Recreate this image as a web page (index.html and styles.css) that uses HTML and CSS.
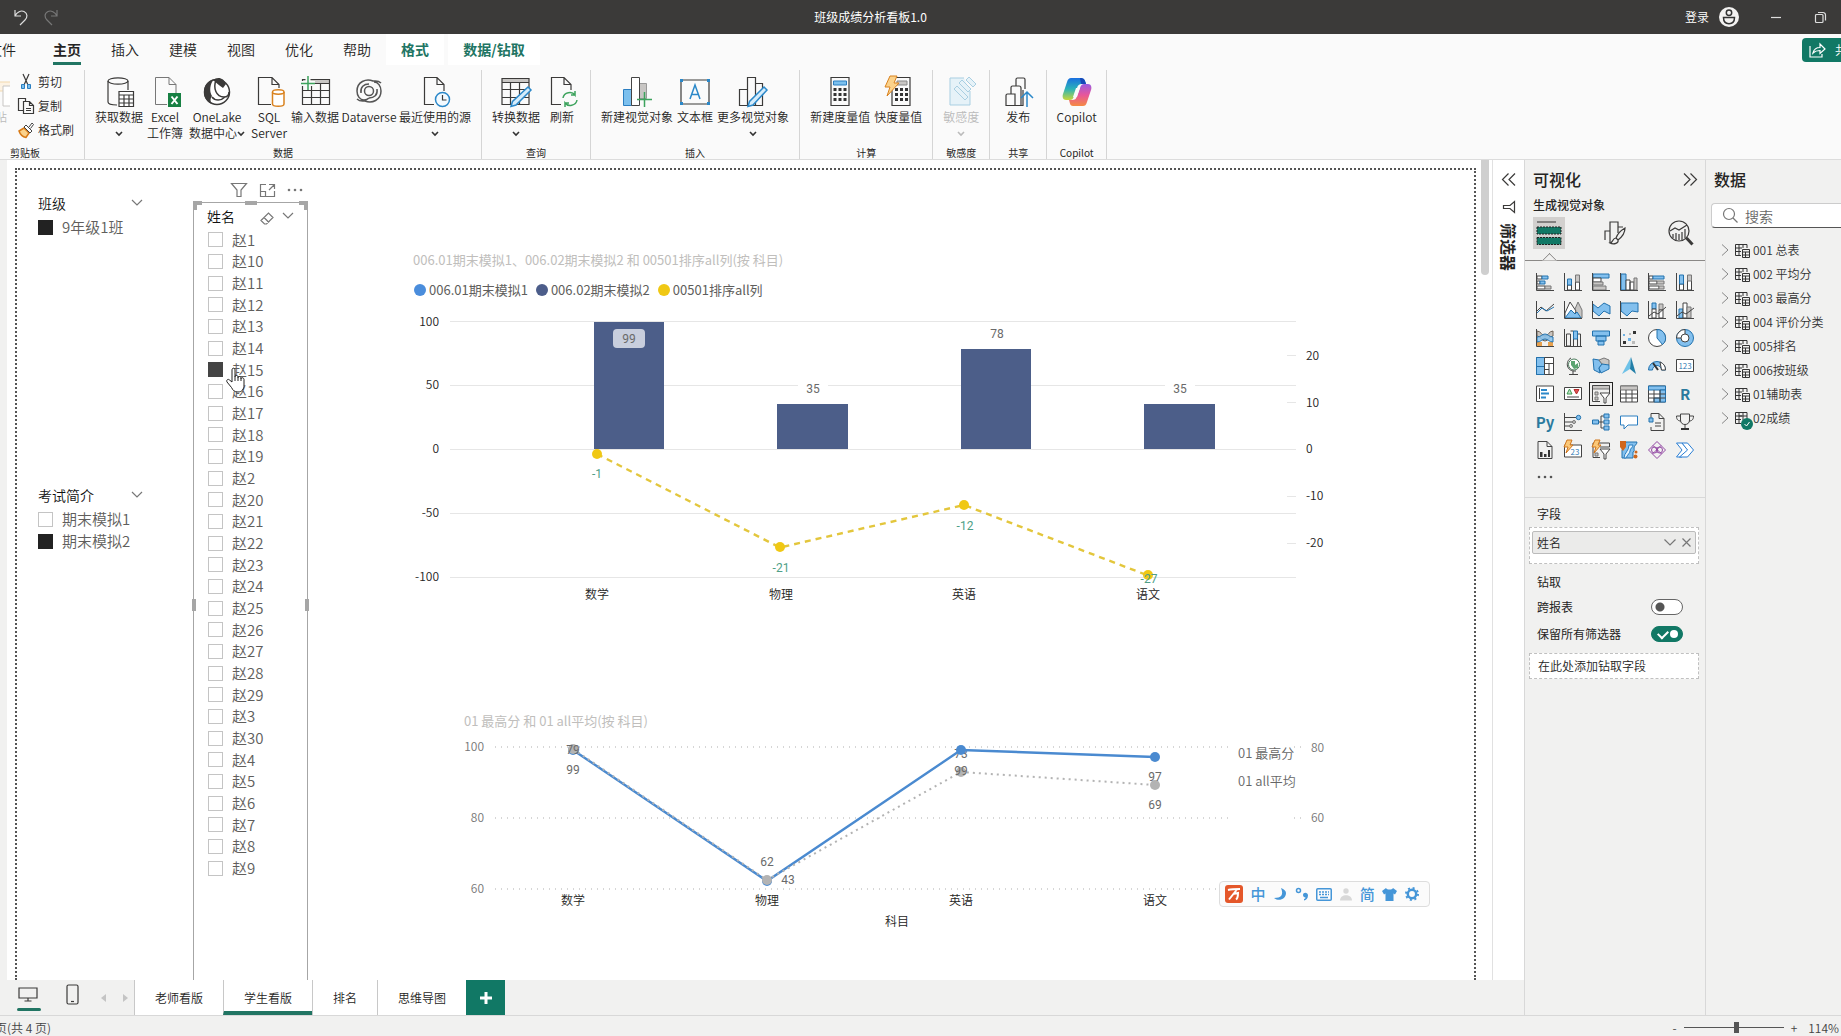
FILE: index.html
```html
<!DOCTYPE html>
<html lang="zh-CN">
<head>
<meta charset="utf-8">
<title>班级成绩分析看板1.0</title>
<meta name="viewport" content="width=device-width, initial-scale=1">
<link rel="stylesheet" href="styles.css">
</head>
<body>
<div class="app">

<header class="titlebar">
  <div class="titlebar-side">
    <button class="ghost" aria-label="撤消"><svg width="16" height="18" viewBox="0 0 16 18" class="ln light"><path d="M2 2v6h6M2 8C4 4 8 2 11 3.500c4 2 3.500 6 1 8.500L7 17"/></svg></button>
    <button class="ghost" aria-label="恢复"><svg width="16" height="18" viewBox="0 0 16 18" class="ln dim"><path d="M14 2v6H8M14 8C12 4 8 2 5 3.500c-4 2-3.500 6-1 8.500l5 5"/></svg></button>
  </div>
  <h1 class="doc-title">班级成绩分析看板1.0</h1>
  <div class="titlebar-side end">
    <a href="#" class="login">登录</a>
    <svg width="20" height="20" viewBox="0 0 20 20"><circle cx="10" cy="10" r="10" fill="#f3f2f1"/><g fill="none" stroke="#333" stroke-width="1.500"><circle cx="10" cy="5.800" r="2.700"/><path d="M4.500 10.500h11c0 4-2 6.200-5.500 6.200s-5.500-2.200-5.500-6.200z"/></g></svg>
    <button class="ghost win" aria-label="最小化"><svg width="10" height="10" viewBox="0 0 10 10" class="ln light"><path d="M0 5.500h10"/></svg></button>
    <button class="ghost win" aria-label="还原"><svg width="11" height="11" viewBox="0 0 11 11" class="ln light"><rect x=".5" y="2.500" width="7.500" height="8" rx="1"/><path d="M3 .5h5a2.500 2.500 0 0 1 2.500 2.500v5.500"/></svg></button>
  </div>
</header>

<div class="ribbon">
  <nav class="tabs">
    <a href="#" class="tab file">文件</a>
    <a href="#" class="tab active"><span>主页</span></a>
    <a href="#" class="tab">插入</a>
    <a href="#" class="tab">建模</a>
    <a href="#" class="tab">视图</a>
    <a href="#" class="tab">优化</a>
    <a href="#" class="tab">帮助</a>
    <a href="#" class="tab context">格式</a>
    <a href="#" class="tab context wide">数据/钻取</a>
    <button class="share"><svg width="17" height="15" viewBox="0 0 17 15" class="ln white"><path d="M1 3v11h12v-3M4 10c1-4 3-5.500 7-5.500V1l5 5-5 4.500V7.500c-3 0-5 .5-7 2.500z"/></svg>共享</button>
  </nav>

  <div class="groups">
    <section class="group clip">
      <div class="items">
        <button class="item paste"><svg width="30" height="30" viewBox="0 0 30 30"><path d="M8 5h21v9H8z" fill="#fdf3e4" stroke="#f3d9ad"/><path d="M14 9h15v20H14z" fill="#fff" stroke="#c8c6c4"/></svg><span>粘贴</span></button>
        <div class="stack">
          <button class="mini"><svg width="16" height="16" viewBox="0 0 16 16"><path d="M5 0l5 11M11 0L6 11" class="ln"/><g fill="#7cc0ee" stroke="#2b7ec1"><path d="M3.500 10.500h3v4h-3zM9.500 10.500h3v4h-3z"/></g></svg>剪切</button>
          <button class="mini"><svg width="16" height="16" viewBox="0 0 16 16" class="ln"><path d="M5 12.500H.5V.5h7V3M5.500 3.500h6l4 4v8h-10zM11.500 3.500v4h4M8 10.500h5M8 12.500h5"/></svg>复制</button>
          <button class="mini"><svg width="16" height="16" viewBox="0 0 16 16"><path d="M1 9l5-3 5 5-3 4.500C5 15 2 12 1 9z" fill="#fbd28b" stroke="#d87a16" stroke-width="1.500"/><path d="M6 5l2-2 6 6-2 2zM11 5l3-4 1.500 1.500-3 4" fill="#fff" stroke="#444"/></svg>格式刷</button>
        </div>
      </div>
      <h2>剪贴板</h2>
    </section>

    <section class="group">
      <div class="items">
        <button class="item"><svg width="30" height="30" viewBox="0 0 30 30" class="ln"><ellipse cx="14" cy="4" rx="10" ry="3.200"/><path d="M4 4v21c0 2 4 3 9 3M24 4v9"/><path d="M15 14.500h14.500v15H15z" fill="#fff"/><path d="M15 18h14.500M15 22h14.500M15 26h14.500M20 18v11M25 18v11"/></svg><span>获取数据</span><svg class="chev" viewBox="0 0 8 6"><path d="M1 1l3 3 3-3"/></svg></button>
        <button class="item"><svg width="30" height="30" viewBox="0 0 30 30"><path d="M17 27.500H5.500v-27H19l7 7V16M19 .5v7h7" fill="none" stroke="#777"/><path d="M18 16h13v14H18z" fill="#178043"/><path d="M21.500 19.500l6 7.500M27.500 19.500L21.500 27" stroke="#fff" stroke-width="2"/></svg><span>Excel<br>工作簿</span></button>
        <button class="item lake"><svg width="30" height="30" viewBox="0 0 30 30"><circle cx="15" cy="15" r="12.500" fill="#fff" stroke="#3b3a39" stroke-width="1.500"/><path d="M12 2C5 4 2 9 2 15c0 6 3 10 8 12-2-3-2-5 0-8-3-5-2-12 2-17z" fill="#3b3a39"/><path d="M11 3c5-4 11-2 13 4l-3 4c-4-3-7-5-10-8z" fill="#3b3a39"/><path d="M14 3c-3 8 0 17 8 17 3 0 5-2 5-5M10 20c3 4 9 4 13 0" fill="none" stroke="#3b3a39" stroke-width="1.500"/></svg><span>OneLake<br>数据中心<svg class="chev" viewBox="0 0 8 6"><path d="M1 1l3 3 3-3"/></svg></span></button>
        <button class="item"><svg width="30" height="30" viewBox="0 0 30 30"><path d="M17 27.500H4.500v-27H18l7 7V11M18 .5v7h7" class="ln"/><g fill="#fff" stroke="#d9821f" stroke-width="1.500"><path d="M18.500 15v12c0 3 11.500 3 11.500 0V15"/><ellipse cx="24.250" cy="15" rx="5.750" ry="2.200"/></g></svg><span>SQL<br>Server</span></button>
        <button class="item"><svg width="30" height="30" viewBox="0 0 30 30"><path d="M2.500 2.500h27v4h-27z" fill="#c8c6c4"/><path d="M2.500 2.500h27v25h-27zM2.500 6.500h27M2.500 13.500h27M2.500 20.500h27M11.500 6.500v21M20.500 6.500v21" class="ln"/><path d="M8 0v13M1 6.500h14" stroke="#fafafa" stroke-width="5"/><path d="M8-1v14M1 6.500h14" stroke="#3da35d" stroke-width="1.500"/></svg><span>输入数据</span></button>
        <button class="item verse"><svg width="30" height="30" viewBox="0 0 30 30" fill="none" stroke="#555" stroke-width="1.500"><path d="M27 6c-3-3-6-2-8-2C12 1 3 5 3 14c0 5 3 9 7 9 3 0 5-2 5-2M3 22c3 3 6 2 8 2 7 3 16-1 16-10 0-5-3-9-7-9"/><circle cx="15" cy="14" r="4.500"/><path d="M7 16c-1-6 3-9 8-9M23 12c1 6-3 9-8 9"/></svg><span>Dataverse</span></button>
        <button class="item"><svg width="30" height="30" viewBox="0 0 30 30"><path d="M14 27.500H4.500v-27H17l7 7V14M17 .5v7h7" class="ln"/><circle cx="22.500" cy="22.500" r="7" fill="#f3faff" stroke="#2b88c9" stroke-width="1.500"/><path d="M22.500 18v5h4" class="ln"/></svg><span>最近使用的源</span><svg class="chev" viewBox="0 0 8 6"><path d="M1 1l3 3 3-3"/></svg></button>
      </div>
      <h2>数据</h2>
    </section>

    <section class="group">
      <div class="items">
        <button class="item"><svg width="30" height="30" viewBox="0 0 30 30"><path d="M1 1.500h27v4H1z" fill="#c8c6c4"/><path d="M1 1.500h27v26H1zM1 5.500h27M1 12.500h27M1 20.500h27M9.500 5.500v22M18.500 5.500v22" class="ln"/><path d="M27 10l3 3-15 15-5 1.500 1.500-5z" fill="#d5ecfb" stroke="#2b88c9" stroke-width="1.500"/></svg><span>转换数据</span><svg class="chev" viewBox="0 0 8 6"><path d="M1 1l3 3 3-3"/></svg></button>
        <button class="item"><svg width="30" height="30" viewBox="0 0 30 30"><path d="M14 27.500H4.500v-27H17l7 7V13M17 .5v7h7" class="ln"/><path d="M16 21c1-6 9-7 12-3v-4M28 18h-4M30 23c-1 6-9 7-12 3v4M18 26h4" fill="none" stroke="#3da35d" stroke-width="1.500"/></svg><span>刷新</span></button>
      </div>
      <h2>查询</h2>
    </section>

    <section class="group">
      <div class="items">
        <button class="item"><svg width="30" height="30" viewBox="0 0 30 30"><path d="M1.500 12.500h8v16h-8z" fill="#7cc0ee" stroke="#2b7ec1"/><path d="M17.500 6.500h7v15h-7z" fill="#c8c6c4" stroke="#999"/><path d="M9.500.5h8v28h-8z" fill="#fff" stroke="#444"/><path d="M22.500 15v15M15 22.500h15" stroke="#3da35d" stroke-width="1.500"/></svg><span>新建视觉对象</span></button>
        <button class="item"><svg width="30" height="30" viewBox="0 0 30 30"><path d="M1 3h28v24H1z" class="ln"/><g fill="#2b88c9"><path d="M0 2h3v3H0zM27 2h3v3h-3zM0 25h3v3H0zM27 25h3v3h-3z"/></g><path d="M10 22l5-14 5 14M12 17.500h6" fill="none" stroke="#2b88c9" stroke-width="1.500"/></svg><span>文本框</span></button>
        <button class="item"><svg width="30" height="30" viewBox="0 0 30 30"><path d="M1.500 12.500h8v16h-8zM9.500.5h8v28h-8zM17.500 6.500h7v22h-7z" class="ln"/><path d="M26 10l3 3-14 15-5 1.500 1.500-5z" fill="#d5ecfb" stroke="#2b88c9" stroke-width="1.500"/></svg><span>更多视觉对象</span><svg class="chev" viewBox="0 0 8 6"><path d="M1 1l3 3 3-3"/></svg></button>
      </div>
      <h2>插入</h2>
    </section>

    <section class="group">
      <div class="items">
        <button class="item"><svg width="30" height="30" viewBox="0 0 30 30"><path d="M6 .5h18v28H6z" class="ln"/><path d="M8.500 4h13v4h-13z" fill="#7cc0ee" stroke="#2b7ec1"/><g fill="#333"><path d="M8.500 11h3v3h-3zM13.500 11h3v3h-3zM18.500 11h3v3h-3zM8.500 16h3v3h-3zM13.500 16h3v3h-3zM18.500 16h3v3h-3zM8.500 21h3v3h-3zM13.500 21h3v3h-3zM18.500 21h3v3h-3z"/></g></svg><span>新建度量值</span></button>
        <button class="item"><svg width="30" height="30" viewBox="0 0 30 30"><path d="M9 .5h18v28H9z" class="ln"/><path d="M14 4h10v4H14z" fill="#c8c6c4" stroke="#888"/><g fill="#333"><path d="M12 11h3v3h-3zM17 11h3v3h-3zM22 11h3v3h-3zM12 16h3v3h-3zM17 16h3v3h-3zM22 16h3v3h-3zM12 21h3v3h-3zM17 21h3v3h-3zM22 21h3v3h-3z"/></g><path d="M7-1h7l-3 7h5L4 19l3-9H2z" fill="#fbd28b" stroke="#d9821f"/></svg><span>快度量值</span></button>
      </div>
      <h2>计算</h2>
    </section>

    <section class="group">
      <div class="items">
        <button class="item off" disabled><svg width="30" height="30" viewBox="0 0 30 30" fill="#e6f2f8" stroke="#a9cfe2"><path d="M18 1H4v27h20V14"/><path d="M8 12l3-3 11 11-3 3zM13 6l3-3 9 9-3 3zM20 3l3-3 7 7-3 3z"/></svg><span>敏感度</span><svg class="chev" viewBox="0 0 8 6"><path d="M1 1l3 3 3-3"/></svg></button>
      </div>
      <h2>敏感度</h2>
    </section>

    <section class="group">
      <div class="items">
        <button class="item"><svg width="30" height="30" viewBox="0 0 30 30"><path d="M3 28V18.500q0-1.500 1.500-1.500H12v11.500H3zM12 28.500h8V13M8 17v-6.500Q8 9 9.500 9H16q2 0 2 2v17M13 9V2.500Q13 1 14.500 1h6Q22 1 22 2.500V12" class="ln"/><path d="M24 30V15M18 21l6-6 6 6" fill="none" stroke="#2b88c9" stroke-width="1.500"/></svg><span>发布</span></button>
      </div>
      <h2>共享</h2>
    </section>

    <section class="group">
      <div class="items">
        <button class="item copilot"><svg width="30" height="30" viewBox="0 0 30 30"><defs><linearGradient id="ca" x1="0" y1="0" x2="0" y2="1"><stop offset="0" stop-color="#1a6fe0"/><stop offset=".5" stop-color="#2bb3b8"/><stop offset="1" stop-color="#c9d63a"/></linearGradient><linearGradient id="cb" x1="0" y1="0" x2="0" y2="1"><stop offset="0" stop-color="#9b5be0"/><stop offset=".5" stop-color="#e8569a"/><stop offset="1" stop-color="#f58a42"/></linearGradient></defs><path d="M9 1h10c3 0 4 2 5 6h-4c-3 0-4 1-5 4l-3 8c-1 3-2 4-4 4H4c-3 0-4-3-3-6L5 5c1-3 2-4 4-4z" fill="url(#ca)"/><path d="M21 29H11c-3 0-3-3-4-6h3c3 0 4-1 5-4l3-8c1-3 2-4 4-4h4c3 0 4 3 3 6l-4 12c-1 3-2 4-4 4z" fill="url(#cb)"/><path d="M14 11h4l-3 9h-4z" fill="#fafafa"/><path d="M18 1c4 0 5 2 6 6h-5z" fill="#1749b8"/></svg><span>Copilot</span></button>
      </div>
      <h2>Copilot</h2>
    </section>
  </div>
</div>

<main class="workspace">
  <div class="stage">
    <div class="stage-top">
      <div class="viewport">
        <div class="page">
          <div class="slicers">
            <fieldset class="slicer">
              <legend><span>班级</span><svg width="12" height="8" viewBox="0 0 12 8" class="ln soft"><path d="M1 1l5 5 5-5"/></svg></legend>
              <label class="opt"><input type="checkbox" checked>9年级1班</label>
            </fieldset>
            <fieldset class="slicer">
              <legend><span>考试简介</span><svg width="12" height="8" viewBox="0 0 12 8" class="ln soft"><path d="M1 1l5 5 5-5"/></svg></legend>
              <label class="opt"><input type="checkbox">期末模拟1</label>
              <label class="opt"><input type="checkbox" checked>期末模拟2</label>
            </fieldset>
          </div>

          <section class="names">
            <div class="visual-tools">
              <svg width="16" height="14" viewBox="0 0 16 14" class="ln soft"><path d="M.5.5h15L10 7v6.500H6V7z"/></svg>
              <svg width="15" height="13" viewBox="0 0 15 13" class="ln soft"><path d="M6 .5H.5v12h14V7M9 .5h5.500V5M14 1L9 6M.5 7.500h5v5"/></svg>
              <svg width="16" height="4" viewBox="0 0 16 4" fill="#777"><circle cx="2" cy="2" r="1.300"/><circle cx="8" cy="2" r="1.300"/><circle cx="14" cy="2" r="1.300"/></svg>
            </div>
            <i class="handle tl"></i><i class="handle tm"></i><i class="handle tr"></i><i class="handle ml"></i><i class="handle mr"></i>
            <header><span>姓名</span><svg width="14" height="13" viewBox="0 0 14 13" class="ln soft eraser"><path d="M1 8.500L8.500 1 13 5.500 6.500 12H4.500zM4 5.500l5 5"/></svg><svg width="12" height="8" viewBox="0 0 12 8" class="ln soft"><path d="M1 1l5 5 5-5"/></svg></header>
            <div class="name-list">
              <label class="opt"><input type="checkbox">赵1</label>
              <label class="opt"><input type="checkbox">赵10</label>
              <label class="opt"><input type="checkbox">赵11</label>
              <label class="opt"><input type="checkbox">赵12</label>
              <label class="opt"><input type="checkbox">赵13</label>
              <label class="opt"><input type="checkbox">赵14</label>
              <label class="opt hovered"><input type="checkbox" checked>赵15
                <svg class="hand" width="20" height="26" viewBox="0 0 20 26"><path d="M7 15V3c0-2.500 3-2.500 3 0v7c0-2 3-2 3 0v1c0-2 3-2 3 0v1c0-2 3-1.500 3 .5V18c0 4-2 7-6 7-3.500 0-5-1.500-6.500-4.500L2 15c-1-2 1-3.500 2.500-2z" fill="#fff" stroke="#222"/><path d="M10 10v4M13 11v3M16 12v2" stroke="#222"/></svg></label>
              <label class="opt"><input type="checkbox">赵16</label>
              <label class="opt"><input type="checkbox">赵17</label>
              <label class="opt"><input type="checkbox">赵18</label>
              <label class="opt"><input type="checkbox">赵19</label>
              <label class="opt"><input type="checkbox">赵2</label>
              <label class="opt"><input type="checkbox">赵20</label>
              <label class="opt"><input type="checkbox">赵21</label>
              <label class="opt"><input type="checkbox">赵22</label>
              <label class="opt"><input type="checkbox">赵23</label>
              <label class="opt"><input type="checkbox">赵24</label>
              <label class="opt"><input type="checkbox">赵25</label>
              <label class="opt"><input type="checkbox">赵26</label>
              <label class="opt"><input type="checkbox">赵27</label>
              <label class="opt"><input type="checkbox">赵28</label>
              <label class="opt"><input type="checkbox">赵29</label>
              <label class="opt"><input type="checkbox">赵3</label>
              <label class="opt"><input type="checkbox">赵30</label>
              <label class="opt"><input type="checkbox">赵4</label>
              <label class="opt"><input type="checkbox">赵5</label>
              <label class="opt"><input type="checkbox">赵6</label>
              <label class="opt"><input type="checkbox">赵7</label>
              <label class="opt"><input type="checkbox">赵8</label>
              <label class="opt"><input type="checkbox">赵9</label>
            </div>
          </section>

          <div class="charts">
            <figure class="chart first">
              <figcaption>006.01期末模拟1、006.02期末模拟2 和 00501排序all列(按 科目)</figcaption>
              <ul class="legend"><li class="k1">006.01期末模拟1</li><li class="k2">006.02期末模拟2</li><li class="k3">00501排序all列</li></ul>
              <svg class="plot" viewBox="308 302 1166 318">
                <g stroke="#e6e6e6"><path d="M450 321.500h846M450 385.500h846M450 449.500h846M450 513.500h846M450 577.500h846M1287 355.500h9M1287 402.500h9M1287 496.500h9M1287 543.500h9"/></g>
                <g fill="#4c5e89"><path d="M594 322h70v127h-70zM777 404h71v45h-71zM961 349h70v100h-70zM1144 404h71v45h-71z"/></g>
                <rect x="613" y="329" width="32" height="19" rx="4" fill="#c8cedd"/>
                <path d="M798 380h30v10h-30zM1165 380h30v10h-30z" fill="#fff"/>
                <path d="M597 454L780 547.500 964 505l184 70.500" fill="none" stroke="#e3c63c" stroke-width="2.400" stroke-dasharray="6 5"/>
                <g fill="#f0c814"><circle cx="597" cy="454" r="5"/><circle cx="780" cy="547" r="5"/><circle cx="964" cy="505" r="5"/><circle cx="1148" cy="575" r="5"/></g>
                <g class="axis end"><text x="439" y="326">100</text><text x="439" y="389">50</text><text x="439" y="453">0</text><text x="439" y="517">-50</text><text x="439" y="581">-100</text></g>
                <g class="axis"><text x="1306" y="360">20</text><text x="1306" y="407">10</text><text x="1306" y="453">0</text><text x="1306" y="500">-10</text><text x="1306" y="547">-20</text></g>
                <g class="val"><text x="629" y="343">99</text><text x="813" y="393">35</text><text x="997" y="338">78</text><text x="1180" y="393">35</text></g>
                <g class="val green"><text x="597" y="478">-1</text><text x="781" y="572">-21</text><text x="965" y="530">-12</text><text x="1149" y="583">-27</text></g>
                <g class="axis mid"><text x="597" y="599">数学</text><text x="781" y="599">物理</text><text x="964" y="599">英语</text><text x="1148" y="599">语文</text></g>
              </svg>
            </figure>
            <figure class="chart second">
              <figcaption>01 最高分 和 01 all平均(按 科目)</figcaption>
              <svg class="plot" viewBox="308 733 1166 247">
                <path d="M495 747h737M495 818h737M495 889h737M1294 747h7M1294 818h7" stroke="#d6d6d6" stroke-width="2" stroke-dasharray="1 5"/>
                <g class="val"><text x="961" y="758">73</text></g>
                <path d="M573 750L767 881 961 750l194 7" fill="none" stroke="#4a8ad0" stroke-width="2.400"/>
                <path d="M573 749L767 880 961 772l194 13" fill="none" stroke="#b3b3b3" stroke-width="2" stroke-dasharray="2 4"/>
                <g fill="#4a8ad0"><circle cx="573" cy="750" r="5"/><circle cx="767" cy="881" r="5"/><circle cx="961" cy="750" r="5"/><circle cx="1155" cy="757" r="5"/></g>
                <g fill="#b3b3b3"><circle cx="573" cy="749" r="5"/><circle cx="767" cy="880" r="5"/><circle cx="961" cy="772" r="5"/><circle cx="1155" cy="785" r="5"/></g>
                <g class="val"><text x="573" y="754">79</text><text x="573" y="774">99</text><text x="767" y="866">62</text><text x="788" y="884">43</text><text x="961" y="775">99</text><text x="1155" y="781">97</text><text x="1155" y="809">69</text></g>
                <g class="axis gray end"><text x="484" y="751">100</text><text x="484" y="822">80</text><text x="484" y="893">60</text></g>
                <g class="axis gray"><text x="1311" y="752">80</text><text x="1311" y="822">60</text></g>
                <g class="series"><text x="1238" y="758">01 最高分</text><text x="1238" y="786">01 all平均</text></g>
                <g class="axis mid"><text x="573" y="905">数学</text><text x="767" y="905">物理</text><text x="961" y="905">英语</text><text x="1155" y="905">语文</text><text x="897" y="926">科目</text></g>
              </svg>
            </figure>
          </div>
        </div>
        <div class="ime">
          <svg width="18" height="18" viewBox="0 0 18 18"><rect width="18" height="18" rx="3" fill="#e4572a"/><path d="M3 5c4-1 8-1 12-1M12 4.500L4 14.500M8 9l5-1c0 3 0 5-2 6.500" fill="none" stroke="#fff" stroke-width="2"/></svg>
          <span>中</span>
          <svg width="14" height="14" viewBox="0 0 14 14"><path d="M8 1c3 7 0 10-7 10 5 4 12 1 12-5 0-2-2-4-5-5z" fill="#4596d8"/></svg>
          <svg width="14" height="14" viewBox="0 0 14 14"><circle cx="3.500" cy="3.500" r="2" fill="none" stroke="#4596d8" stroke-width="1.500"/><path d="M8 8c0-3 5-3 5 .5 0 3-2 4.500-4 5v-1.500c1 0 1.500-1 1.500-1.500C9 10.500 8 9.500 8 8z" fill="#4596d8"/></svg>
          <svg width="16" height="13" viewBox="0 0 16 13"><rect x=".75" y=".75" width="14.500" height="11.500" rx="1" fill="none" stroke="#4596d8" stroke-width="1.500"/><path d="M3 4h10M3 6.500h10" stroke="#4596d8" stroke-width="1.500" stroke-dasharray="2 1"/><path d="M4 9.500h8" stroke="#4596d8" stroke-width="1.500"/></svg>
          <svg width="12" height="13" viewBox="0 0 12 13" fill="#d8d8d8"><circle cx="6" cy="3" r="2.700"/><path d="M0 12.500c0-7 12-7 12 0z"/></svg>
          <span>简</span>
          <svg width="15" height="13" viewBox="0 0 15 13" fill="#4596d8"><path d="M4 0c1 2 6 2 7 0l4 3-2 3.500-1.500-1V13h-8V5.500l-1.500 1L0 3z"/></svg>
          <svg width="14" height="14" viewBox="0 0 14 14" fill="none" stroke="#4596d8"><circle cx="7" cy="7" r="4.200" stroke-width="2.500"/><circle cx="7" cy="7" r="6" stroke-width="2" stroke-dasharray="2 2.700"/></svg>
        </div>
        <div class="scrollbar"><i></i></div>
      </div>
      <aside class="filters">
        <button class="ghost" aria-label="展开"><svg width="14" height="13" viewBox="0 0 14 13" class="ln"><path d="M6.500.5l-6 6 6 6M13 .5l-6 6 6 6"/></svg></button>
        <svg width="12" height="12" viewBox="0 0 12 12" class="ln"><path d="M11.500.5v11L7 7.500H.5v-3H7z"/></svg>
        <h2>筛选器</h2>
      </aside>
    </div>
    <nav class="pagebar">
      <button class="view on" aria-label="桌面布局"><svg width="20" height="15" viewBox="0 0 20 15" class="ln"><path d="M1 1h18v10H1zM10 11v3M6.500 14h7"/></svg></button>
      <button class="view phone" aria-label="移动布局"><svg width="13" height="21" viewBox="0 0 13 21" class="ln"><rect x="1" y="1" width="11" height="19" rx="1.500"/><path d="M5 17.500h3"/></svg></button>
      <button class="arrow" aria-label="上一页"><svg width="6" height="8" viewBox="0 0 6 8"><path d="M5 0v8L0 4z" fill="#c4c4c4"/></svg></button>
      <button class="arrow" aria-label="下一页"><svg width="6" height="8" viewBox="0 0 6 8"><path d="M1 0v8l5-4z" fill="#c4c4c4"/></svg></button>
      <a href="#" class="ptab">老师看版</a>
      <a href="#" class="ptab current">学生看版</a>
      <a href="#" class="ptab">排名</a>
      <a href="#" class="ptab">思维导图</a>
      <button class="add" aria-label="新建页"><svg width="12" height="12" viewBox="0 0 12 12"><path d="M6 0v12M0 6h12" stroke="#fff" stroke-width="3"/></svg></button>
    </nav>
  </div>

  <aside class="pane viz">
    <header class="pane-head"><h2>可视化</h2><svg width="14" height="13" viewBox="0 0 14 13" class="ln"><path d="M1 .5l6 6-6 6M7.500 .5l6 6-6 6"/></svg></header>
    <h3>生成视觉对象</h3>
    <div class="modes">
      <button class="mode on" aria-label="生成"><svg width="26" height="26" viewBox="0 0 26 26"><path d="M1 2h19" stroke="#333"/><path d="M1 7h24v7H1zM1 17.500h24v7H1z" fill="#117865" stroke="#222" stroke-dasharray="2 1"/></svg></button>
      <button class="mode" aria-label="格式"><svg width="24" height="24" viewBox="0 0 24 24" class="ln"><path d="M2 19v-9h5M7 22V1h8v11M15 6h5" /><path d="M22 7c-5 3-8 7-9 10l2 2c4-3 7-8 7-12zM13 17c-4 0-2 4-6 5 4 2 9 0 8-3" fill="#f1f1f0"/></svg></button>
      <button class="mode" aria-label="分析"><svg width="26" height="26" viewBox="0 0 26 26" class="ln"><circle cx="11" cy="11" r="10"/><path d="M2 11l5-3 4 2 8-5M5 18v-4M8 20v-7M11 20v-6M14 20v-8M17 18V9"/><path d="M18.500 18l6 6.500" stroke-width="3"/></svg></button>
    </div>
    <div class="gallery">
      <button aria-label="堆积条形图"><svg viewBox="0 0 18 18"><path d="M1 3h5v3H1zM1 8h3v3H1zM1 13h8v3H1z" class="w"/><path d="M6 3h6v3H6zM4 8h5v3H4z" class="b"/><path d="M9 13h6v3H9z" class="g"/><path d="M.5 0v17.500H18" class="k"/></svg></button>
      <button aria-label="堆积柱形图"><svg viewBox="0 0 18 18"><path d="M3.500 12h4v5h-4zM11.500 9h4v8h-4z" class="w"/><path d="M3.500 6h4v6h-4z" class="b"/><path d="M11.500 2h4v7h-4z" class="g"/><path d="M.5 0v17.500H18" class="k"/></svg></button>
      <button aria-label="簇状条形图"><svg viewBox="0 0 18 18"><path d="M1 1h16v4H1z" class="b"/><path d="M1 5h8v4H1z" class="w"/><path d="M1 9h10v3H1zM1 13h13v4H1z" class="g"/><path d="M.5 0v17.500H18" class="k"/></svg></button>
      <button aria-label="簇状柱形图"><svg viewBox="0 0 18 18"><path d="M1 1h5v16H1z" class="b"/><path d="M6 7h4v10H6zM10 9h4v8h-4z" class="w"/><path d="M14 5h3v12h-3z" class="g"/><path d="M.5 0v17.500H18" class="k"/></svg></button>
      <button aria-label="百分比堆积条形图"><svg viewBox="0 0 18 18"><path d="M1 3h4v3H1zM1 8h8v3H1zM1 13h10v3H1z" class="w"/><path d="M5 3h11v3H5z" class="b"/><path d="M9 8h7v3H9zM11 13h5v3h-5z" class="g"/><path d="M.5 0v17.500H18" class="k"/></svg></button>
      <button aria-label="百分比堆积柱形图"><svg viewBox="0 0 18 18"><path d="M3.500 11h4v6h-4zM11.500 7h4v10h-4z" class="w"/><path d="M3.500 2h4v9h-4z" class="b"/><path d="M11.500 2h4v6h-4z" class="g"/><path d="M.5 0v17.500H18" class="k"/></svg></button>

      <button aria-label="折线图"><svg viewBox="0 0 18 18"><path d="M1 10l4-4 5 4 8-7" class="k"/><path d="M1 12l5-5 5 3 7-4" class="bl"/><path d="M.5 0v17.500H18" class="k"/></svg></button>
      <button aria-label="分区图"><svg viewBox="0 0 18 18"><path d="M8 15l6-14 4 8v8z" class="g"/><path d="M1 12L6 1l6 9-3 7H1z" class="w"/><path d="M1 17l6-8 4 4 2-2 4 6z" class="b"/><path d="M.5 0v17.500H18" class="k"/></svg></button>
      <button aria-label="堆积面积图"><svg viewBox="0 0 18 18"><path d="M1 3l5 4 6-5 6 3v8l-6-3-5 5-6-5z" class="b"/><path d="M.5 0v17.500H18" class="k"/></svg></button>
      <button aria-label="百分比堆积面积图"><svg viewBox="0 0 18 18"><path d="M1 2h17v9l-6-1-5 5-6-5z" class="b"/><path d="M.5 0v17.500H18" class="k"/></svg></button>
      <button aria-label="折线和堆积柱形图"><svg viewBox="0 0 18 18"><path d="M4 2h4v6H4z" class="b"/><path d="M11 3h4v6h-4z" class="g"/><path d="M4 8h4v9H4zM11 9h4v8h-4z" class="w"/><path d="M1 15l5-4 4 2 8-7M.5 0v17.500H18" class="k"/></svg></button>
      <button aria-label="折线和簇状柱形图"><svg viewBox="0 0 18 18"><path d="M3 8h4v9H3z" class="b"/><path d="M7 2h4v15H7z" class="w"/><path d="M11 6h4v11h-4z" class="g"/><path d="M1 15l5-4 4 2 8-6M.5 0v17.500H18" class="k"/></svg></button>

      <button aria-label="功能区图表"><svg viewBox="0 0 18 18"><path d="M1 13h5v4H1zM12 13h5v4h-5z" fill="#e8a04c"/><path d="M1 2c4 0 5 5 8 5s4-5 8-5v5c-4 0-4 5-8 5S5 7 1 7z" fill="#c9c5c0" stroke="#6e6255"/><path d="M1 8c4 0 5-3 8-3s4 3 8 3v5c-4 0-5-3-8-3s-4 3-8 3z" class="b" fill-opacity=".8"/><path d="M.5 0v17.500H18" class="k"/></svg></button>
      <button aria-label="瀑布图"><svg viewBox="0 0 18 18"><path d="M2.500 5h4v12h-4zM6.500 2h3v15M13.500 8v9M13.500 5h3v12" class="k"/><path d="M9.500 2h4v8h-4z" class="b"/><path d="M.5 0v17.500H18" class="k"/></svg></button>
      <button aria-label="漏斗图"><svg viewBox="0 0 18 18"><path d="M.5 2h17v5H.500zM4 7h10v5H4zM6 12h6v4H6z" class="b"/></svg></button>
      <button aria-label="散点图"><svg viewBox="0 0 18 18"><path d="M13 2h3v3h-3zM3 12h3v3H3z" fill="#333"/><path d="M3 5h2v2H3zM8 9h3v3H8z" fill="#6fb2e4"/><path d="M9 4h2v2H9zM12 12h3v3h-3z" fill="#bbb"/><path d="M.5 0v17.500H18" class="k"/></svg></button>
      <button aria-label="饼图"><svg viewBox="0 0 18 18"><circle cx="9" cy="9" r="8.500" class="w"/><path d="M9 9V.5A8.500 8.500 0 0 1 14.500 15.500z" class="b"/></svg></button>
      <button aria-label="环形图"><svg viewBox="0 0 18 18"><circle cx="9" cy="9" r="8.500" class="b"/><path d="M9 9H.5A8.500 8.500 0 0 1 9 .5z" class="w"/><circle cx="9" cy="9" r="4" class="w"/></svg></button>

      <button aria-label="树状图"><svg viewBox="0 0 18 18"><path d="M.5.5h17v17H.500z" class="w"/><path d="M.5.5h8v9h-8zM.5 9.500h8v8h-8z" class="b"/><path d="M8.500.5v17M8.500 6.500h9M13 6.500v11M8.500 12.500H13" class="k"/></svg></button>
      <button aria-label="地图"><svg viewBox="0 0 18 18"><circle cx="10" cy="7.500" r="5.500" fill="#fff" stroke="#4b7d5c"/><path d="M7 4h4v4l3-2v5l-4 1-3-4z" fill="#5aa571"/><path d="M7 1C1 4 2 15 12 14M9 14v3M5 17.500h9" class="k"/></svg></button>
      <button aria-label="着色地图"><svg viewBox="0 0 18 18"><path d="M1 2l6 1 3 4-3 4 1 5-6-3z" class="b"/><path d="M7 3l5-2 5 2v5l-4 1-3-2z" class="g"/><path d="M7 11l3-4 7 1v4l-8 4z" class="b"/></svg></button>
      <button aria-label="Azure 地图"><svg viewBox="0 0 18 18"><path d="M11 0L2 17l8-5z" fill="#6ec2e8"/><path d="M11 0l5 17-6-5z" fill="#237fa8"/></svg></button>
      <button aria-label="仪表"><svg viewBox="0 0 18 18"><path d="M.5 13a8.500 8.500 0 0 1 17 0h-4a4.500 4.500 0 0 0-9 0z" class="b"/><path d="M12 5a8.500 8.500 0 0 1 5.500 8h-4z" class="w"/><path d="M5 6l5 7" stroke="#333" stroke-width="2"/></svg></button>
      <button aria-label="卡片"><svg viewBox="0 0 18 18"><path d="M.5 2.500h17v12H.500z" class="w"/><text x="9" y="12" class="t">123</text></svg></button>

      <button aria-label="多行卡"><svg viewBox="0 0 18 18"><path d="M.5 1h17v15.500H.500z" class="w"/><path d="M5 5h6M5 8.500h8M5 12.500h5" stroke="#2b88c9" stroke-width="2"/><path d="M3.500 3v11" class="k"/></svg></button>
      <button aria-label="KPI"><svg viewBox="0 0 18 18"><path d="M.5 2.500h17v12H.500z" class="w"/><path d="M3 9l2.500-5L8 9z" fill="#bfe3c5" stroke="#3c9a50"/><path d="M10 4.500h5L12.500 9z" fill="#e05252" stroke="#b32d2d"/><path d="M3 12h12" class="k"/></svg></button>
      <button class="picked" aria-label="切片器"><svg viewBox="0 0 18 18"><path d="M.5.500h17V4H.500z" class="g"/><path d="M8 16.500H.500V.500h17V9" class="k"/><path d="M3 7h3v3H3zM3 12h3v3H3z" class="g"/><path d="M8 8h10l-4 5v5h-2v-5z" class="w"/></svg></button>
      <button aria-label="表"><svg viewBox="0 0 18 18"><path d="M.5 1h17v16H.500z" class="w"/><path d="M.5 1h17v4H.500z" class="g"/><path d="M.5 9h17M.5 13h17M6 5v12M12 5v12" class="k"/></svg></button>
      <button aria-label="矩阵"><svg viewBox="0 0 18 18"><path d="M.5 1h17v16H.500z" class="w"/><path d="M.5 1h17v4H.500z" class="b"/><path d="M12 5h5.500v12H12zM6 13h6v4H6z" class="b"/><path d="M.5 9h17M.5 13h17M6 5v12M12 5v12" class="k"/></svg></button>
      <button aria-label="R 脚本"><b>R</b></button>

      <button aria-label="Python 脚本"><b>Py</b></button>
      <button aria-label="关键影响者"><svg viewBox="0 0 18 18"><path d="M.5 0v17.500H18M1 4.500h11M1 9h8M1 13h5" class="k"/><circle cx="14.500" cy="4.500" r="2.200" class="b"/><circle cx="10" cy="9" r="1.500" class="g"/><circle cx="7" cy="13" r="1.500" class="g"/></svg></button>
      <button aria-label="分解树"><svg viewBox="0 0 18 18"><path d="M6 9h6M9 3v12M9 3h3M9 15h3" class="k"/><path d="M.5 7h6v4h-6zM12 1h5v4h-5zM12 7h5v4h-5zM12 13h5v4h-5z" class="b"/></svg></button>
      <button aria-label="问答"><svg viewBox="0 0 18 18"><path d="M.5 3h17v9H8l-4 4v-4H.500z" fill="#fff" stroke="#2b7ec1"/></svg></button>
      <button aria-label="叙述"><svg viewBox="0 0 18 18"><path d="M3 6V.5h8l5 5v12H3V14M11 .5v5h5M7 10h6M7 13h6" class="k"/><path d="M1 5h4v4H1z" class="b"/></svg></button>
      <button aria-label="目标"><svg viewBox="0 0 18 18"><path d="M4.500 1h9v6c0 3-2 4.500-4.500 4.500S4.500 10 4.500 7zM4.500 3h-4c0 4 2 5 4.500 5M13.500 3h4c0 4-2 5-4.500 5M9 11.500V15" class="k"/><path d="M5 15h8v2H5z" fill="#333"/></svg></button>

      <button aria-label="分页报表"><svg viewBox="0 0 18 18"><path d="M2 .5h9l5 5v12H2zM11 .5v5h5" class="k"/><path d="M4 11h2.500v5H4zM8 13h2.500v3H8zM12 9h2v7h-2z" fill="#333"/></svg></button>
      <button aria-label="快速卡片"><svg viewBox="0 0 18 18"><path d="M.5 4h17v12H.500z" class="w"/><text x="11" y="14" class="t">23</text><path d="M3-1h5L6 4h3l-7 8 2-6H0z" class="o"/></svg></button>
      <button aria-label="快速切片器"><svg viewBox="0 0 18 18"><path d="M8 16.500H1V2h16.500v4H8" class="k"/><path d="M3 12h3v3H3z" class="g"/><path d="M8 8h10l-4 5v5h-2v-5z" class="w"/><path d="M3-1h5L6 4h3l-7 8 2-6H0z" class="o"/></svg></button>
      <button aria-label="ArcGIS 地图"><svg viewBox="0 0 18 18"><path d="M2 17V9l4-8h11c0 3-3 3-3 6 0 2 1 3-1 4v6z" class="b"/><path d="M9 4h4c0 3-3 3-3 6 0 2-2 3-4 7H4c0-5 5-7 5-13z" fill="#e4f2fb" stroke="#2b7ec1"/><path d="M0 0h6v6L3 10 0 6z" fill="#d0661c"/><circle cx="16" cy="11" r="1.500" fill="#d0661c"/><circle cx="15.500" cy="15.500" r="2" fill="#d0661c"/></svg></button>
      <button aria-label="Power Apps"><svg viewBox="0 0 18 18" fill="none" stroke="#9246a3"><path d="M9 .5L17.500 9 9 17.500.5 9zM5 4.500l8.500 8.500M13 4.500L4.500 13"/><circle cx="6.500" cy="9" r="3"/><circle cx="11.500" cy="9" r="3"/></svg></button>
      <button aria-label="Power Automate"><svg viewBox="0 0 18 18" fill="#fff" stroke="#2b7fd4"><path d="M.5 2H6l6 7-6 7H.5l5.500-7z"/><path d="M6 2h5.500l6 7-6 7H3.500l8-7z"/></svg></button>
      <button class="more" aria-label="获取更多视觉对象"><svg viewBox="0 0 18 18" fill="#555"><circle cx="3" cy="8" r="1.300"/><circle cx="9" cy="8" r="1.300"/><circle cx="15" cy="8" r="1.300"/></svg></button>
    </div>
    <div class="wells">
      <h3>字段</h3>
      <div class="well"><div class="pill"><span>姓名</span><svg width="12" height="7" viewBox="0 0 12 7" class="ln soft"><path d="M.5.5L6 6l5.500-5.500"/></svg><svg width="9" height="9" viewBox="0 0 9 9" class="ln soft"><path d="M.5.5l8 8M8.500.5l-8 8"/></svg></div></div>
      <h3 class="drill">钻取</h3>
      <label class="toggle">跨报表<input type="checkbox" role="switch"></label>
      <label class="toggle">保留所有筛选器<input type="checkbox" role="switch" checked></label>
      <div class="well drop">在此处添加钻取字段</div>
    </div>
  </aside>

  <aside class="pane data">
    <header class="pane-head"><h2>数据</h2></header>
    <label class="search"><svg width="15" height="15" viewBox="0 0 15 15" class="ln soft"><circle cx="6" cy="6" r="5.500"/><path d="M10 10l4.500 4.500"/></svg><input type="search" placeholder="搜索" aria-label="搜索"></label>
    <ul class="tables">
      <li>001 总表</li><li>002 平均分</li><li>003 最高分</li><li>004 评价分类</li><li>005排名</li><li>006按班级</li><li>01辅助表</li><li class="ok">02成绩</li>
    </ul>
  </aside>
</main>

<footer class="status">
  <div class="page-count"><span>第 2 页(共 4 页)</span></div>
  <div class="zoom"><button class="ghost" aria-label="缩小">-</button><input type="range" min="10" max="200" value="111" aria-label="缩放"><button class="ghost" aria-label="放大">+</button><span>114%</span></div>
</footer>
</div>
<script src="tables.js"></script>
</body>
</html>
```
FILE: tables.js
```js
// Adds the expander and the table glyph in front of every table name.
const glyph =
  '<svg class="expander" width="8" height="12" viewBox="0 0 8 12"><path d="M1 .5L7 6l-6 5.500"/></svg>' +
  '<svg class="table-icon" width="15" height="15" viewBox="0 0 15 15">' +
  '<path d="M6 12.500H.5V1.500H12V5M.5 5H7M.5 8.500H6M4 1.500v11M8 1.500V5"/>';
const calc = '<path d="M7.500 6.500h7v8h-7zM7.500 9h7M7.500 12h7M10.500 9v5" fill="#f1f1f0"/>';
const check = '<path d="M12 5v3M8 5v4M4 5h8"/><circle cx="12" cy="13" r="6" class="dot"/><path d="M9.500 13l2 2 3-4" class="tick"/>';
document.querySelectorAll('.tables li').forEach((row) => {
  const extra = row.classList.contains('ok') ? check : calc;
  row.insertAdjacentHTML('afterbegin', glyph + extra + '</svg>');
});
```
FILE: styles.css
```css
* { box-sizing: border-box; }
body, h1, h2, h3, ul, figure, fieldset, legend { margin: 0; padding: 0; }
body {
  font: 350 12px/16px "Noto Sans CJK SC", "Noto Sans", sans-serif;
  color: #252423;
  background: #f1f1f0;
  overflow: hidden;
}
a { color: inherit; text-decoration: none; }
ul { list-style: none; }
button { font: inherit; color: inherit; background: none; border: 0; padding: 0; }
fieldset { border: 0; min-width: 0; }
svg { display: block; flex: none; overflow: visible; }
.ln { fill: none; stroke: #3b3a39; stroke-width: 1.2; }
.ln.soft { stroke: #777; }
.ln.light { stroke: #ddd; }
.ln.white { stroke: #fff; }
.ln.dim { stroke: #777; }

.app { display: flex; flex-direction: column; height: 100vh; }

/* title bar */
.titlebar { display: flex; align-items: center; height: 34px; background: #3b3a39; color: #fff; flex: none; }
.titlebar-side { flex: 1; display: flex; align-items: center; gap: 14px; padding-left: 13px; }
.titlebar-side.end { justify-content: flex-end; gap: 10px; padding: 0 15px 0 0; }
.doc-title { font-size: 12px; font-weight: 400; flex: none; margin-right: 98px; }
.win { width: 34px; display: flex; justify-content: center; }
.win:first-of-type { margin-left: 10px; }
.win:last-of-type { width: 11px; margin-left: 12px; }

/* ribbon */
.ribbon { flex: none; height: 126px; background: #fafafa; border-bottom: 1px solid #dcdcdc; overflow: hidden; }
.tabs { display: flex; height: 32px; font-size: 14px; line-height: 30px; }
.tab { width: 58px; text-align: center; flex: none; height: 31px; }
.tab.file { width: 38px; display: flex; justify-content: flex-end; padding-right: 22px; white-space: nowrap; }
.tab.active { font-weight: 700; }
.tab.active span { display: inline-block; height: 31px; border-bottom: 3px solid #217563; }
.tab.context { background: #fff; color: #217563; font-weight: 700; }
.tab.wide { width: 92px; margin-left: 4px; }
.share { display: flex; align-items: center; gap: 9px; width: 39px; height: 24px; margin: 4px 0 0 auto; padding-left: 7px; background: #117865; color: #fff; border-radius: 4px 0 0 4px; font-size: 12px; white-space: nowrap; overflow: hidden; }
.groups { display: flex; padding-top: 4px; }
.group { height: 89px; border-right: 1px solid #d5d5d5; padding: 4px 10px 0; display: flex; flex-direction: column; justify-content: space-between; flex: none; }
.group h2 { font-size: 10px; line-height: 12px; font-weight: 400; text-align: center; }
.items { display: flex; gap: 4px; }
.item { display: flex; flex-direction: column; align-items: center; min-width: 36px; padding-top: 3px; white-space: nowrap; }
.item > span { margin-top: 2px; }
.item > .chev { margin-top: 6px; }
.item .chev { width: 8px; height: 6px; fill: none; stroke: #333; stroke-width: 1.6; }
.item span .chev { display: inline-block; vertical-align: 1px; }
.item.lake { width: 60px; }
.item.verse { width: 52px; }
.item.copilot { width: 39px; }
.item.off { color: #bbb; }
.item.off .chev { stroke: #bbb; }
.clip { width: 85px; padding: 4px 0 0; }
.clip h2 { padding-right: 34px; }
.clip .items { gap: 8px; }
.item.paste { width: 10px; min-width: 0; align-items: flex-end; color: #bbb; padding-right: 3px; overflow: hidden; }
.paste svg { margin-right: -12px; }
.stack { display: flex; flex-direction: column; }
.mini { display: flex; align-items: center; gap: 4px; height: 24px; white-space: nowrap; }
.clip .stack { margin-top: -4px; }

/* workspace */
.workspace { display: flex; flex: 1; min-height: 0; }
.stage { flex: 1; min-width: 0; display: flex; flex-direction: column; }
.stage-top { flex: 1; min-height: 0; display: flex; }
.viewport { flex: 1; min-width: 0; display: flex; position: relative; background: #fff; border-left: 7px solid #f1f1f0; overflow: hidden; }
.page { flex: 1; min-width: 0; margin: 8px 0 0 8px; border: 2px dotted #555; border-bottom: 0; display: grid; grid-template-columns: 176px 115px minmax(0, 1fr); overflow: hidden; }
.scrollbar { width: 16px; flex: none; padding-left: 5px; }
.scrollbar i { display: block; width: 8px; height: 115px; background: #cfcfcf; border-radius: 0 0 4px 4px; }

.slicers { display: flex; flex-direction: column; gap: 247px; padding: 23px 49px 0 21px; }
.slicer legend { display: flex; justify-content: space-between; width: 105px; font-size: 14px; line-height: 20px; margin-bottom: 3px; color: #111; }
.slicer legend svg { margin-top: 6px; }
.opt { display: flex; align-items: center; gap: 9px; height: 22px; font-size: 15px; color: #605e5c; white-space: nowrap; }
.opt input { appearance: none; width: 15px; height: 15px; margin: 0; border: 1px solid #c4c4c4; background: #fff; flex: none; }
.opt input:checked { background: #222; border-color: #222; }
.names { position: relative; margin-top: 32px; border: 1px solid #a6a6a6; border-bottom: 0; }
.names header { display: flex; align-items: flex-start; height: 26px; padding: 3px 13px 0; font-size: 14px; line-height: 20px; color: #111; }
.names header span { margin-right: auto; white-space: nowrap; }
.names header svg { margin-top: 6px; }
.names .eraser { margin-right: 8px; }
.name-list { display: grid; grid-auto-rows: 1fr; height: 650px; padding-left: 14px; }
.name-list .opt { height: auto; }
.opt.hovered { position: relative; }
.opt.hovered input { background: #444; border-color: #444; }
.hand { position: absolute; left: 17px; top: 8px; }
.visual-tools { position: absolute; left: 37px; top: -21px; width: 72px; height: 16px; display: flex; align-items: center; justify-content: space-between; }
.handle { position: absolute; border: 0 solid #a6a6a6; }
.tl { left: -1px; top: -2px; width: 9px; height: 9px; border-width: 4px 0 0 4px; }
.tr { right: -1px; top: -2px; width: 9px; height: 9px; border-width: 4px 4px 0 0; }
.tm { left: 51px; top: -2px; width: 12px; border-top-width: 4px; }
.ml { left: -2px; top: 396px; height: 12px; border-left-width: 4px; }
.mr { right: -2px; top: 396px; height: 12px; border-left-width: 4px; }

/* charts */
.charts { display: flex; flex-direction: column; }
.chart figcaption { color: #c0bebc; font-size: 13px; line-height: 24px; font-weight: 400; }
.first { padding-top: 78px; }
.first figcaption { padding-left: 105px; }
.legend { display: flex; gap: 8px; padding: 6px 0 0 106px; font-size: 13px; line-height: 24px; color: #605e5c; font-weight: 400; }
.legend li { display: flex; align-items: center; gap: 3px; }
.legend li::before { content: ""; width: 12px; height: 12px; border-radius: 50%; background: #4a8ddc; }
.legend .k2::before { background: #4c5d8a; }
.legend .k3::before { background: #f0c814; }
.second { padding-top: 89px; }
.second figcaption { padding-left: 156px; }
.plot { width: 100%; height: auto; }
.plot text { font-size: 12px; fill: #252423; }
.plot .end text { text-anchor: end; }
.plot .mid text { text-anchor: middle; }
.plot .gray text { fill: #777; }
.plot .series text { font-size: 13px; fill: #666; }
.plot .val text { font-family: Roboto, sans-serif; font-weight: 400; text-anchor: middle; fill: #6a6a6a; }
.plot .val.green text { fill: #4f9f87; }

.ime { position: absolute; right: 62px; bottom: 73px; height: 26px; width: 211px; padding: 0 10px 0 5px; display: flex; align-items: center; justify-content: space-between; background: #fbfbfb; border: 1px solid #ddd; border-radius: 4px; color: #4596d8; font-size: 15px; font-weight: 500; }

.filters { width: 32px; flex: none; background: #fff; border-left: 1px solid #e1e1e1; display: flex; flex-direction: column; align-items: center; padding-top: 13px; gap: 15px; }
.filters h2 { writing-mode: vertical-rl; text-orientation: sideways; font-size: 16px; line-height: 20px; margin-top: -5px; }

/* page tabs */
.pagebar { height: 35px; flex: none; display: flex; padding-left: 5px; }
.view { width: 46px; display: flex; justify-content: center; align-items: flex-start; padding-top: 7px; position: relative; }
.view.on::after { content: ""; position: absolute; left: 12px; bottom: 4px; width: 24px; height: 3px; background: #217563; border-radius: 2px; }
.view.phone { width: 42px; padding-top: 4px; }
.arrow { width: 21px; display: flex; justify-content: center; align-items: center; }
.arrow + .ptab { margin-left: -1px; }
.ptab { padding: 0 20px; line-height: 36px; background: #fff; border-left: 1px solid #c8c8c8; }
.ptab.current { border-bottom: 4px solid #217563; }
.add { width: 39px; background: #117865; display: flex; justify-content: center; align-items: center; }

/* panes */
.pane { flex: none; border-left: 1px solid #d8d8d8; overflow: hidden; }
.viz { width: 181px; }
.data { width: 136px; }
.pane-head { display: flex; justify-content: space-between; align-items: center; padding: 7px 8px 0; }
.pane h2 { font-size: 16px; line-height: 24px; font-weight: 500; }
.pane h3 { font-size: 12px; line-height: 16px; font-weight: 500; }
.viz > h3 { padding: 6px 8px 4px; }
.modes { display: flex; justify-content: space-between; padding: 0 8px 11px; border-bottom: 1px solid #8a8886; position: relative; }
.mode { width: 32px; height: 32px; display: flex; align-items: center; justify-content: center; }
.mode.on { background: #d2d0ce; }
.modes::after { content: ""; position: absolute; left: 19px; bottom: -6px; width: 10px; height: 10px; border: solid #8a8886; border-width: 1px 0 0 1px; background: #f1f1f0; transform: rotate(45deg); clip-path: polygon(0 0, 100% 0, 0 100%); }
.gallery { display: grid; grid-template-columns: repeat(6, 28px); grid-auto-rows: 28px; padding: 7px 0 5px 6px; }
.gallery button { display: flex; align-items: center; justify-content: center; }
.gallery svg { width: 18px; height: 18px; }
.gallery b { font-size: 15px; color: #2b7a9e; }
.gallery .picked { outline: 1px solid #222; outline-offset: -3px; }
.gallery .w { fill: #fff; stroke: #444; }
.gallery .b { fill: #83c0ee; stroke: #2272ae; }
.gallery .g { fill: #c8c6c4; stroke: #777; }
.gallery .k { fill: none; stroke: #444; }
.gallery .bl { fill: none; stroke: #2272ae; }
.gallery .o { fill: #fbc878; stroke: #d0761c; }
.gallery .t { font-size: 8px; fill: #2272ae; text-anchor: middle; }
.wells { border-top: 1px solid #d8d8d8; padding: 8px 6px 0 4px; }
.wells h3, .toggle { padding: 0 8px; font-weight: 400; }
.well { background: #fff; border: 1px dashed #c0c0c0; height: 37px; margin-top: 5px; padding: 3px 2px; }
.pill { display: flex; align-items: center; gap: 6px; height: 23px; padding: 0 4px; background: #ebebea; border: 1px solid #bbb; border-radius: 2px; }
.pill span { flex: 1; }
.wells .drill { margin: 10px 0 9px; }
.toggle { display: flex; justify-content: space-between; align-items: center; height: 16px; padding-right: 16px; margin-bottom: 11px; }
.toggle input { appearance: none; width: 32px; height: 16px; margin: 0; border: 1px solid #666; border-radius: 8px; background: radial-gradient(circle at 8px 7px, #555 4px, transparent 5px) #fff; }
.toggle input:checked { border-color: #117865; background: #117865; position: relative; }
.toggle input:checked::before { content: ""; position: absolute; right: 4px; top: 3px; width: 8px; height: 8px; border-radius: 50%; background: #fff; }
.toggle input:checked::after { content: ""; position: absolute; left: 6px; top: 3px; width: 8px; height: 5px; border: solid #fff; border-width: 0 0 2px 2px; transform: rotate(-45deg); }
.drop { height: 26px; padding: 4px 8px; line-height: 16px; }

.search { display: flex; align-items: center; gap: 7px; height: 25px; margin: 12px 0 0 5px; padding-left: 11px; background: #fff; border: 1px solid #ccc; border-right: 0; border-bottom-color: #555; border-radius: 4px 0 0 4px; }
.search input { flex: 1; min-width: 0; border: 0; outline: 0; background: none; font: inherit; font-size: 14px; padding: 0; }
.search input::placeholder { color: #666; opacity: 1; }
.tables { padding: 10px 0 0 15px; }
.tables li { display: flex; align-items: center; height: 24px; white-space: nowrap; color: #333; }
.expander { fill: none; stroke: #888; margin-right: 6px; }
.table-icon { fill: none; stroke: #333; margin-right: 3px; }
.table-icon .dot { fill: #117865; stroke: none; }
.table-icon .tick { stroke: #fff; }

/* status bar */
.status { height: 21px; flex: none; display: flex; justify-content: space-between; align-items: center; border-top: 1px solid #d8d8d8; color: #444; padding-top: 3px; }
.page-count { width: 51px; display: flex; justify-content: flex-end; overflow: hidden; white-space: nowrap; }
.zoom { display: flex; align-items: center; gap: 7px; padding-right: 2px; }
.zoom span { margin-left: 4px; }
.zoom input { appearance: none; width: 100px; height: 12px; margin: 0; background: linear-gradient(#555, #555) center / 100% 1px no-repeat; }
.zoom input::-webkit-slider-thumb { appearance: none; width: 5px; height: 11px; background: #555; }
```
